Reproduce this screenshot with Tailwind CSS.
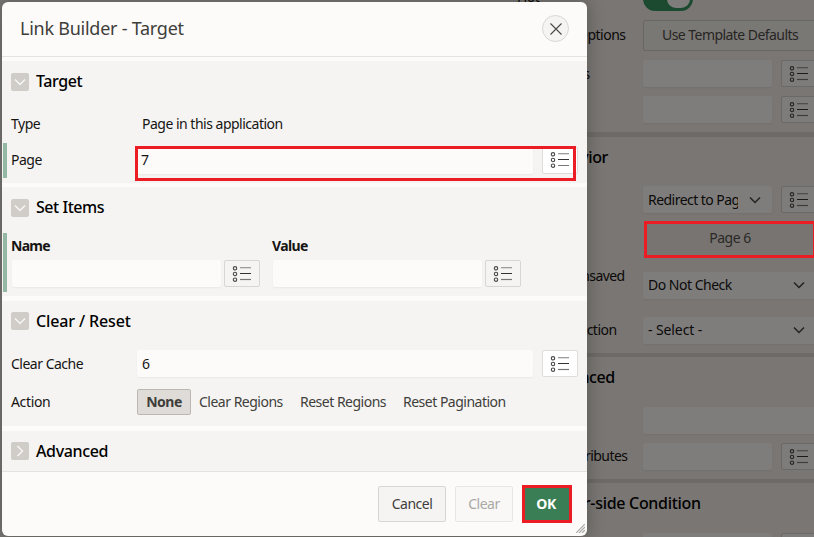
<!DOCTYPE html>
<html lang="en">
<head>
<meta charset="utf-8">
<title>Link Builder - Target</title>
<script src="https://cdn.jsdelivr.net/npm/@tailwindcss/browser@4"></script>
</head>
<body class="relative h-[537px] w-[814px] overflow-hidden bg-[#787673] font-['Noto_Sans','Open_Sans',sans-serif] text-[14px] leading-5 tracking-[-0.5px] text-[#161513]">
<svg class="hidden">
  <symbol id="list" viewBox="0 0 20 16"><g fill="none"><g stroke="#4a4846" stroke-width="1.1"><circle cx="3" cy="2.3" r="1.7"/><circle cx="3" cy="8" r="1.7"/><circle cx="3" cy="13.7" r="1.7"/></g><path d="M8 1.5h11" stroke="#999"/><path d="M8 2.3h11" stroke="#bbb" stroke-width=".6"/><path d="M8 7.5h11" stroke="#333"/><path d="M8 13.5h11" stroke="#777" stroke-width="1.2"/></g></symbol>
  <symbol id="down" viewBox="0 0 12 8"><path d="M1 1.5l5 5 5-5" fill="none" stroke="currentColor" stroke-width="1.5"/></symbol>
</svg>

<!-- Property editor behind the modal -->
<main class="ml-[508px] flex h-[537px] w-[306px] flex-col overflow-hidden bg-[#797673] text-[#0b0a09]">
  <div class="flex h-[20px] shrink-0 pl-[9px]"><span class="-mt-[13px] h-5 w-[126px]">Hot</span><span class="-mt-[13px] flex h-6 w-[50px] justify-end rounded-full bg-[#1c4a30] p-[3px]"><i class="h-[18px] w-[23px] rounded-full bg-[#7e7d7b]"></i></span></div>
  <div class="flex h-[31px] shrink-0 items-center pl-[9px]"><span class="w-[126px] shrink-0 pb-px">Template Options</span><div class="flex h-[31px] w-[190px] shrink-0 items-center rounded-xs border border-[#696764] bg-[#7a7875] pb-px pl-[18px] tracking-[-0.55px] text-[#272523]">Use Template Defaults</div></div>
  <div class="mt-[9px] flex h-[27px] shrink-0 items-center pl-[9px]"><span class="w-[126px] shrink-0 pl-[2px]">CSS Classes</span><div class="h-[27px] w-[129px] shrink-0 rounded-xs bg-[#7e7d7c] shadow-xs"></div><div class="ml-[9px] flex h-[27px] w-9 shrink-0 items-center justify-center rounded-xs border border-[#6b6967] bg-[#7d7c7a]"><svg class="h-4 w-5 brightness-50"><use href="#list"/></svg></div></div>
  <div class="mt-[9px] flex h-[27px] shrink-0 items-center pl-[9px]"><span class="w-[126px] shrink-0">Icon</span><div class="h-[27px] w-[129px] shrink-0 rounded-xs bg-[#7e7d7c] shadow-xs"></div><div class="ml-[9px] flex h-[27px] w-9 shrink-0 items-center justify-center rounded-xs border border-[#6b6967] bg-[#7d7c7a]"><svg class="h-4 w-5 brightness-50"><use href="#list"/></svg></div></div>
  <div class="mt-[9px] h-[5px] shrink-0 bg-[#6d6a67]"></div>
  <h2 class="flex h-[49px] shrink-0 items-center pb-[9px] pl-[35px] text-[16px] font-medium tracking-[-0.4px] text-black">Behavior</h2>
  <div class="flex h-[27px] shrink-0 items-center pl-[9px]"><span class="w-[126px] shrink-0">Action</span><div class="flex h-[27px] w-[129px] shrink-0 items-center rounded-xs bg-[#7e7d7c] pl-[5px] shadow-xs"><span class="w-[90px] overflow-hidden whitespace-nowrap tracking-[-0.54px]">Redirect to Page</span><svg class="ml-[11px] h-2 w-3 shrink-0 text-[#222]"><use href="#down"/></svg></div><div class="ml-[9px] flex h-[27px] w-9 shrink-0 items-center justify-center rounded-xs border border-[#6b6967] bg-[#7d7c7a]"><svg class="h-4 w-5 brightness-50"><use href="#list"/></svg></div></div>
  <div class="mt-[8px] ml-[136px] flex h-[37px] w-[172px] shrink-0 items-center justify-center border-[3px] border-[#ec1c24] bg-[#777471] pb-[3px] text-[#2b2927]">Page 6</div>
  <div class="mt-[14px] flex h-[27px] shrink-0 items-center pl-[9px]"><span class="relative -top-[10px] w-[126px] shrink-0 whitespace-nowrap tracking-[-0.6px]">Warn on Unsaved</span><div class="flex h-[27px] w-[180px] shrink-0 items-center rounded-xs bg-[#7e7d7c] pb-px pl-[5px] shadow-xs"><span class="w-[145px]">Do Not Check</span><svg class="h-2 w-3 text-[#222]"><use href="#down"/></svg></div></div>
  <div class="mt-[18px] flex h-[27px] shrink-0 items-center pl-[9px]"><span class="w-[126px] shrink-0 pb-[2px]">Database Action</span><div class="flex h-[27px] w-[180px] shrink-0 items-center rounded-xs bg-[#7e7d7c] pb-px pl-[5px] shadow-xs"><span class="w-[145px] tracking-[-0.1px]">- Select -</span><svg class="h-2 w-3 text-[#222]"><use href="#down"/></svg></div></div>
  <div class="mt-[9px] h-1 shrink-0 bg-[#6d6a67]"></div>
  <h2 class="flex h-[50px] shrink-0 items-center pb-[10px] pl-[35px] text-[16px] font-medium tracking-[-0.4px] text-black">Advanced</h2>
  <div class="ml-[135px] h-[27px] w-[180px] shrink-0 rounded-xs bg-[#7e7d7c] shadow-xs"></div>
  <div class="mt-[9px] flex h-[27px] shrink-0 items-center pl-[9px]"><span class="w-[126px] shrink-0 pb-px tracking-[-0.55px]">Custom Attributes</span><div class="h-[27px] w-[129px] shrink-0 rounded-xs bg-[#7e7d7c] shadow-xs"></div><div class="ml-[9px] flex h-[27px] w-9 shrink-0 items-center justify-center rounded-xs border border-[#6b6967] bg-[#7d7c7a]"><svg class="h-4 w-5 brightness-50"><use href="#list"/></svg></div></div>
  <div class="mt-[9px] h-1 shrink-0 bg-[#6d6a67]"></div>
  <h2 class="flex h-[50px] shrink-0 items-center pb-[10px] pl-[35px] text-[16px] font-medium tracking-[-0.3px] text-black">Server-side Condition</h2>
  <div class="flex h-[27px] shrink-0 pl-[135px]"><div class="w-[129px] shrink-0 rounded-xs bg-[#7e7d7c]"></div><div class="ml-[9px] w-9 shrink-0 rounded-xs border border-[#6b6967] bg-[#7d7c7a]"></div></div>
</main>

<!-- Modal dialog -->
<section class="absolute top-[2px] left-[2px] flex h-[534px] w-[585px] flex-col overflow-hidden rounded-md bg-[#fcfbfa] shadow-[0_0_16px_2px_rgba(0,0,0,0.22)]">
  <header class="flex h-[55px] shrink-0 items-center justify-between border-b border-[#e4e2df] pr-[18px] pl-[18px]">
    <h1 class="-mt-[2px] text-[18px] tracking-[-0.25px] text-[#403e3b]">Link Builder - Target</h1>
    <span class="-mt-px flex h-[27px] w-[27px] items-center justify-center rounded-full border border-[#d8d6d3] bg-[#f5f4f2]"><svg class="h-3 w-3" viewBox="0 0 12 12"><path d="M.5 .5l11 11M11.5 .5l-11 11" stroke="#4a4846" stroke-width="1.1"/></svg></span>
  </header>

  <div class="mt-1 h-[122px] shrink-0 bg-[#f5f4f2]">
    <h2 class="flex h-[41px] items-center gap-[7px] pl-[9px] text-[16px] font-medium tracking-[-0.4px] text-black"><span class="flex h-[18px] w-[18px] items-center justify-center rounded-xs bg-[#d0ccc7] text-[#f7f6f5]"><svg class="h-2 w-3"><use href="#down"/></svg></span><span class="-mt-[2px]">Target</span></h2>
    <div class="flex h-[41px] items-center pt-[2px] pl-[9px]"><span class="w-[131px]">Type</span><span>Page in this application</span></div>
    <div class="relative ml-px flex h-[35px] items-center border-l-4 border-[#94b8a3] pb-px pl-[4px]"><span class="w-[126px]">Page</span><div class="flex h-[27px] w-[396px] items-center rounded-xs bg-[#fcfbfa] pl-[4px] shadow-xs">7</div><div class="ml-[9px] flex h-[27px] w-9 items-center justify-center rounded-xs border border-[#dedcda] bg-white"><svg class="h-4 w-5"><use href="#list"/></svg></div>
      <i class="absolute top-[3px] left-[128px] h-[35px] w-[441px] border-[3px] border-[#ec1c24]"></i></div>
  </div>

  <div class="mt-1 h-[109px] shrink-0 bg-[#f5f4f2]">
    <h2 class="flex h-[41px] items-center gap-[7px] pl-[9px] text-[16px] font-medium tracking-[-0.45px] text-black"><span class="flex h-[18px] w-[18px] items-center justify-center rounded-xs bg-[#d0ccc7] text-[#f7f6f5]"><svg class="h-2 w-3"><use href="#down"/></svg></span><span class="-mt-[2px]">Set Items</span></h2>
    <div class="mt-[5px] ml-px flex h-[59px] border-l-4 border-[#94b8a3] pl-[5px]">
      <div class="w-[261px]"><div class="-ml-px h-[27px] pt-[3px] font-bold tracking-[-0.75px]">Name</div><div class="flex gap-[3px]"><div class="h-[27px] w-[209px] rounded-xs bg-[#fcfbfa] shadow-xs"></div><div class="flex h-[27px] w-9 items-center justify-center rounded-xs border border-[#d8d6d3]"><svg class="h-4 w-5"><use href="#list"/></svg></div></div></div>
      <div><div class="-ml-px h-[27px] pt-[3px] font-bold tracking-[-0.6px]">Value</div><div class="flex gap-[3px]"><div class="h-[27px] w-[209px] rounded-xs bg-[#fcfbfa] shadow-xs"></div><div class="flex h-[27px] w-9 items-center justify-center rounded-xs border border-[#d8d6d3]"><svg class="h-4 w-5"><use href="#list"/></svg></div></div></div>
    </div>
  </div>

  <div class="mt-[5px] h-[125px] shrink-0 bg-[#f5f4f2]">
    <h2 class="flex h-[40px] items-center gap-[7px] pl-[9px] text-[16px] font-medium tracking-[-0.13px] text-black"><span class="flex h-[18px] w-[18px] items-center justify-center rounded-xs bg-[#d0ccc7] text-[#f7f6f5]"><svg class="h-2 w-3"><use href="#down"/></svg></span>Clear / Reset</h2>
    <div class="mt-[9px] flex h-[27px] items-center pl-[9px]"><span class="w-[126px]">Clear Cache</span><div class="flex h-[27px] w-[396px] items-center rounded-xs bg-[#fcfbfa] pl-[5px] shadow-xs">6</div><div class="ml-[9px] flex h-[27px] w-9 items-center justify-center rounded-xs border border-[#dedcda] bg-white"><svg class="h-4 w-5"><use href="#list"/></svg></div></div>
    <div class="mt-3 flex h-[26px] items-center pl-[9px] text-[#403e3b]"><span class="w-[126px] text-[#161513] tracking-[-0.35px]">Action</span><span class="flex h-[26px] w-[54px] items-center justify-center rounded-xs border border-[#bbb8b4] bg-[#dfdcd8] font-bold">None</span><span class="ml-2 w-[101px]">Clear Regions</span><span class="w-[103px]">Reset Regions</span><span>Reset Pagination</span></div>
  </div>

  <div class="mt-[5px] h-[41px] shrink-0 border-b border-[#e4e2df] bg-[#f5f4f2]">
    <h2 class="flex h-[40px] items-center gap-[7px] pl-[9px] text-[16px] font-medium tracking-[-0.36px] text-black"><span class="flex h-[18px] w-[18px] items-center justify-center rounded-xs bg-[#d0ccc7] text-[#f7f6f5]"><svg class="h-2 w-3 -rotate-90"><use href="#down"/></svg></span>Advanced</h2>
  </div>

  <footer class="flex flex-1 items-center justify-end pr-[15px] text-[#403e3b]">
    <span class="flex h-9 w-[68px] items-center justify-center rounded-xs border border-[#d8d6d3] bg-[#f5f4f2]">Cancel</span>
    <span class="ml-[9px] flex h-9 w-[58px] items-center justify-center rounded-xs border border-[#e8e6e4] bg-[#f9f8f7] text-[#aaa8a5]">Clear</span>
    <span class="ml-[9px] flex h-[38px] w-[50px] items-center justify-center border-[3px] border-[#ec1c24] bg-[#397e54] pr-[2px] font-bold text-white">OK</span>
  </footer>
  <svg class="absolute right-[2px] bottom-[3px] h-[9px] w-[9px]" viewBox="0 0 9 9"><path d="M0 9L9 0M3 9L9 3M6 9l3-3" stroke="#aaa" stroke-width="1.2"/></svg>
</section>
</body>
</html>
